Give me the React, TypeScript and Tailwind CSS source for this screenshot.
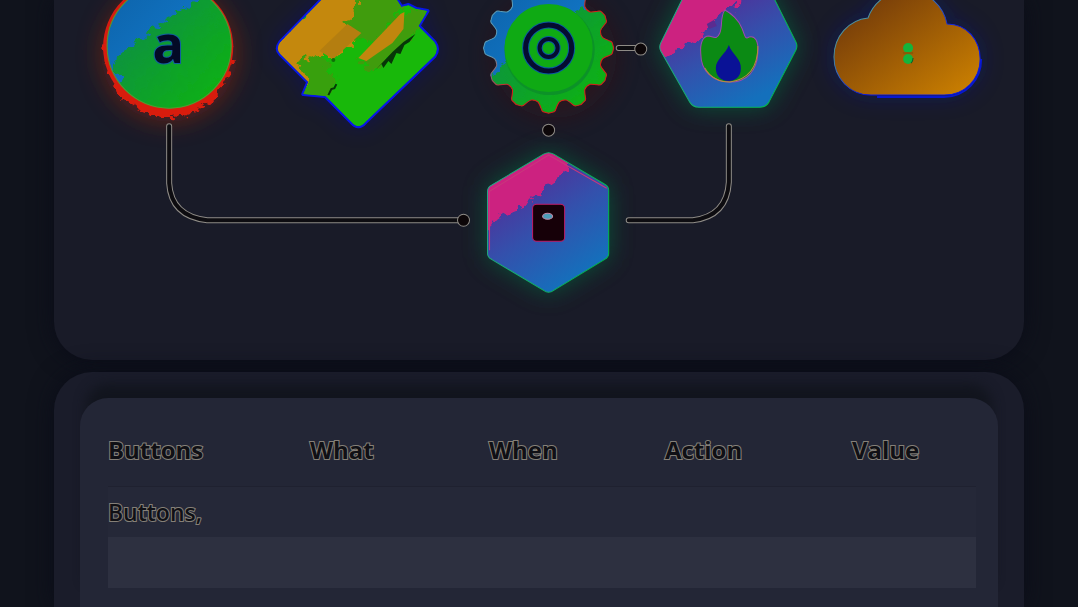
const columns = [
  { label: 'Buttons', width: 'w-[202px]' },
  { label: 'What', width: 'w-[179px]' },
  { label: 'When', width: 'w-[176px]' },
  { label: 'Action', width: 'w-[187px]' },
  { label: 'Value', width: 'w-[124px]' },
];

const rows = [
  { label: 'Buttons,', className: 'bg-[#252838]' },
  { label: '', className: 'bg-[#2d3040]' },
];

// Gear outline with twelve rounded teeth
function gearPath(cx: number, cy: number) {
  const point = (radius: number, deg: number) => {
    const rad = (deg * Math.PI) / 180;
    return `${(cx + radius * Math.cos(rad)).toFixed(1)} ${(cy + radius * Math.sin(rad)).toFixed(1)}`;
  };
  let d = `M${point(55, -11)}`;
  for (let i = 0; i < 12; i++) {
    const a = i * 30;
    d += ` Q${point(57, a - 9)} ${point(61, a - 7)}`;
    d += ` Q${point(64, a - 6)} ${point(64, a - 4)}`;
    d += ` L${point(65, a)} L${point(64, a + 4)}`;
    d += ` Q${point(64, a + 6)} ${point(61, a + 7)}`;
    d += ` Q${point(57, a + 9)} ${point(55, a + 11)}`;
    d += ` Q${point(53, a + 15)} ${point(55, a + 19)}`;
  }
  return d + 'Z';
}

const gear = gearPath(548, 48);
const ticket =
  'M325 -4 L280 42 Q275 49 280 54 L308 82 L303 94 L325 96 L351 122 Q358 130 365 122 L434 56 Q439 49 434 42 L418 26 L427 11 L416 9 L408 5 L401 7 L394 -4 Z';
const fireHex =
  'M685 -8 Q688 -13 694 -13 L761 -13 Q767 -13 770 -8 L795 42 Q797 46 795 50 L768 102 Q765 107 759 107 L698 107 Q692 107 689 102 L660 51 Q658 47 660 43 Z';
const fileHex =
  'M543 154 Q548 151 553 154 L604 184 Q608 186 608 190 L608 253 Q608 257 604 259 L553 290 Q548 294 543 290 L491 259 Q487 257 487 253 L487 191 Q487 187 491 185 Z';
const cloud =
  'M870 95 C849 95 833 78 833 57 C833 36 848 20 867 18 A41 41 0 0 1 946 24 C966 24 979 40 979 59 C979 79 964 95 943 95 Z';
const flame =
  'M724 10 C730 13 738 20 741 28 C744 35 744 40 748 37 C754 35 758 41 757 53 C756 71 746 82 729 82 C712 82 700 71 700 54 C699 43 702 36 708 36 C713 37 716 40 719 33 C722 26 719 17 724 10 Z';

const edges = [
  'M169 126 V183 Q171 216 207 220 H460',
  'M728 126 V182 Q726 216 692 220 H628',
  'M618 48 H638',
];

const ports = [
  { x: 463, y: 220 },
  { x: 548, y: 130 },
  { x: 640, y: 49 },
];

function Definitions() {
  return (
    <defs>
      <filter id="ragged" x="-10%" y="-10%" width="120%" height="120%">
        <feTurbulence type="fractalNoise" baseFrequency="0.12" numOctaves="3" seed="4" />
        <feDisplacementMap in="SourceGraphic" scale="16" xChannelSelector="R" yChannelSelector="G" />
      </filter>
      <filter id="glow" x="-50%" y="-50%" width="200%" height="200%">
        <feGaussianBlur stdDeviation="12" />
      </filter>
      <linearGradient id="blue" x1="0" y1="0" x2="1" y2="1">
        <stop offset="0" stopColor="#0d62a8" />
        <stop offset="1" stopColor="#1484dc" />
      </linearGradient>
      <linearGradient id="green" x1="0" y1="0" x2="1" y2="1">
        <stop offset="0.15" stopColor="#0d8c48" />
        <stop offset="0.9" stopColor="#0fba08" />
      </linearGradient>
      <linearGradient id="orange" x1="0" y1="0" x2="1" y2="1">
        <stop offset="0.1" stopColor="#70380a" />
        <stop offset="1" stopColor="#d08400" />
      </linearGradient>
      <linearGradient id="indigo" x1="0.2" y1="0" x2="0.8" y2="1">
        <stop offset="0.1" stopColor="#552a96" />
        <stop offset="0.5" stopColor="#3450ac" />
        <stop offset="0.9" stopColor="#1470bc" />
      </linearGradient>
      <linearGradient id="gearEdge" x1="0" y1="0" x2="1" y2="1">
        <stop offset="0.3" stopColor="#5b9cb8" />
        <stop offset="0.5" stopColor="#d81c14" />
      </linearGradient>
      <linearGradient id="hexEdge" x1="0" y1="0.3" x2="1" y2="0.6">
        <stop offset="0" stopColor="#22a884" />
        <stop offset="1" stopColor="#00b84c" />
      </linearGradient>
      <linearGradient id="cloudEdge" x1="0" y1="0" x2="1" y2="1">
        <stop offset="0.3" stopColor="#4a90a0" />
        <stop offset="0.6" stopColor="#0818e8" />
      </linearGradient>
      <clipPath id="discClip"><circle cx="169" cy="46" r="62" /></clipPath>
      <clipPath id="ticketClip"><path d={ticket} /></clipPath>
      <clipPath id="gearClip"><path d={gear} /></clipPath>
      <clipPath id="fireClip"><path d={fireHex} /></clipPath>
      <clipPath id="fileClip"><path d={fileHex} /></clipPath>
    </defs>
  );
}

function LetterNode() {
  return (
    <g>
      <circle cx="169" cy="54" r="68" fill="#a02808" opacity="0.5" filter="url(#glow)" />
      <circle cx="168" cy="47" r="65" fill="#d81c10" />
      <circle cx="168" cy="54" r="63" fill="#d81c10" filter="url(#ragged)" />
      <circle cx="169" cy="46" r="62" fill="url(#blue)" />
      <g clipPath="url(#discClip)">
        <path
          d="M125 95 L113 62 L127 49 L142 37 L163 22 L182 9 L206 -4 L212 -30 L260 -20 L260 130 L120 130 Z"
          fill="url(#green)"
          filter="url(#ragged)"
        />
      </g>
      <circle cx="169" cy="46" r="62" fill="none" stroke="#559a2c" strokeWidth="1" />
      <text
        x="168"
        y="63"
        textAnchor="middle"
        fontFamily="'Open Sans', sans-serif"
        fontSize="52"
        fontWeight="700"
        fill="#030a26"
        stroke="#1260a0"
        strokeWidth="2"
        paintOrder="stroke"
      >
        a
      </text>
    </g>
  );
}

function TicketNode() {
  return (
    <g>
      <path d={ticket} fill="#0a10a0" opacity="0.4" filter="url(#glow)" />
      <path d={ticket} fill="#18b80a" stroke="#0818e8" strokeWidth="4" strokeLinejoin="round" />
      <g clipPath="url(#ticketClip)">
        <path d={ticket} fill="#18b80a" />
        <g filter="url(#ragged)">
          <path d="M270 49 L328 -10 L360 -10 L356 16 L349 25 L360 33 L333 58 L318 54 L300 65 L312 88 L300 84 Z" fill="#c4880e" />
          <path d="M356 -10 L406 -10 L400 12 L372 42 L352 38 L346 25 L355 18 Z" fill="#409c0a" />
          <path d="M298 62 L319 54 L328 66 L337 82 L325 98 L296 100 L309 84 Z" fill="#38a00a" />
          <path d="M358 60 L402 14 L430 4 L426 22 L373 72 Z" fill="#409c0a" />
        </g>
        <path d="M319 51 L347 24 L361 33 L333 59 Z" fill="#b47e10" />
        <path d="M358 58 L400 14 L404 12 L403 29 L392 43 L366 61 Z" fill="#c0860e" />
        <path
          d="M373 72 L381 64 L383 68 L388 61 L391 64 L396 53 L400 54 L404 45 L409 42 L415 34 L403 42 L392 52 Z"
          fill="#073608"
        />
        <path d="M328 95 L331 89 L334 88 L336 84" fill="none" stroke="#073608" strokeWidth="2" />
        <circle cx="333" cy="60" r="2" fill="#107008" />
      </g>
    </g>
  );
}

function GearNode() {
  return (
    <g>
      <circle cx="554" cy="56" r="62" fill="#4a0808" opacity="0.35" filter="url(#glow)" />
      <path d={gear} fill="url(#blue)" />
      <g clipPath="url(#gearClip)">
        <path d="M480 84 L512 58 L548 26 L584 8 L620 -14 L630 120 L490 130 Z" fill="url(#green)" filter="url(#ragged)" />
      </g>
      <path d={gear} fill="none" stroke="url(#gearEdge)" strokeWidth="1" />
      <circle cx="549" cy="50" r="45" fill="#0c9228" />
      <circle cx="548" cy="48" r="44" fill="#0faa14" />
      <circle cx="548" cy="48" r="23" fill="none" stroke="#0a5aa0" strokeWidth="7" />
      <circle cx="548" cy="48" r="23" fill="none" stroke="#040c30" strokeWidth="5" />
      <circle cx="548" cy="48" r="9" fill="none" stroke="#0a5aa0" strokeWidth="6" />
      <circle cx="548" cy="48" r="9" fill="none" stroke="#040c30" strokeWidth="4" />
    </g>
  );
}

function FireNode() {
  return (
    <g>
      <path d={fireHex} fill="#046a3c" opacity="0.7" filter="url(#glow)" />
      <path d={fireHex} fill="url(#indigo)" />
      <g clipPath="url(#fireClip)">
        <path d="M650 62 L674 50 L696 42 L708 26 L722 14 L742 -2 L744 -30 L650 -30 Z" fill="#cc2480" filter="url(#ragged)" />
        <path d="M706 24 L713 20 L716 26 L708 29 Z" fill="#5a2c90" />
      </g>
      <path d={fireHex} fill="none" stroke="url(#hexEdge)" strokeWidth="1" />
      <path d={flame} fill="#0b8a14" stroke="#a048b0" strokeWidth="1" />
      <path d="M704 68 Q712 82 729 82 Q757 78 757 46" fill="none" stroke="#b88a40" strokeWidth="1" />
      <path d="M728 45 C731 54 741 59 740 69 C740 77 734 81 728 81 C720 81 715 76 715 68 C715 59 725 54 728 45 Z" fill="#0a1296" />
    </g>
  );
}

function CloudNode() {
  return (
    <g>
      <path d={cloud} fill="#0618a0" opacity="0.4" filter="url(#glow)" />
      <path d="M876 97 H943 C965 96 980 80 980 59" fill="none" stroke="#0818d0" strokeWidth="2" />
      <path d={cloud} fill="url(#orange)" stroke="url(#cloudEdge)" strokeWidth="1" />
      <circle cx="907" cy="48" r="5" fill="#14b43c" />
      <circle cx="907" cy="59" r="5" fill="#14b43c" />
      <path d="M902 53 H912" stroke="#8a5a08" strokeWidth="2" />
      <path d="M910 63 Q912 61 912 58" fill="none" stroke="#0c5a28" strokeWidth="1" />
    </g>
  );
}

function FileNode() {
  return (
    <g>
      <path d={fileHex} fill="#046a3c" opacity="0.7" filter="url(#glow)" />
      <path d={fileHex} fill="url(#indigo)" />
      <g clipPath="url(#fileClip)">
        <path d="M480 244 L492 222 L504 214 L522 207 L540 194 L558 178 L572 164 L572 140 L480 140 Z" fill="#cc2480" filter="url(#ragged)" />
      </g>
      <path d={fileHex} fill="none" stroke="url(#hexEdge)" strokeWidth="1" />
      <path d="M489 250 V191 L548 155 L606 188" fill="none" stroke="#c8387c" strokeWidth="1" />
      <rect x="532" y="204" width="32" height="37" rx="4" fill="#160008" stroke="#c01c68" strokeWidth="1" />
      <ellipse cx="547" cy="216" rx="5" ry="3" fill="#4c9cb8" stroke="#c088a8" strokeWidth="1" />
    </g>
  );
}

function Diagram() {
  return (
    <svg viewBox="54 0 969 360" className="block w-full overflow-visible" role="img" aria-label="Flow">
      <Definitions />
      <LetterNode />
      <TicketNode />
      <GearNode />
      <FireNode />
      <CloudNode />
      <FileNode />
      {edges.map((d) => (
        <g key={d} fill="none" strokeLinecap="round">
          <path d={d} stroke="#8e8b86" strokeWidth="6" />
          <path d={d} stroke="#0d0c10" strokeWidth="4" />
        </g>
      ))}
      {ports.map((port) => (
        <circle key={`${port.x}-${port.y}`} cx={port.x} cy={port.y} r="6" fill="#0c0608" stroke="#8e8b86" strokeWidth="1" />
      ))}
    </svg>
  );
}

function ActionsTable() {
  return (
    <table className="w-full table-fixed border-collapse text-left text-2xl text-[#101015] [-webkit-text-stroke:2px_#858078] [paint-order:stroke_fill]">
      <thead>
        <tr className="h-[60px] border-b border-[#1f2130]">
          {columns.map((column) => (
            <th key={column.label} scope="col" className={`${column.width} p-0 pb-3 font-bold`}>
              {column.label}
            </th>
          ))}
        </tr>
      </thead>
      <tbody>
        {rows.map((row, index) => (
          <tr key={index} className={`h-[51px] ${row.className}`}>
            <td className="p-0 text-[23px] font-semibold">{row.label}</td>
            <td colSpan={4} className="p-0" />
          </tr>
        ))}
      </tbody>
    </table>
  );
}

export default function App() {
  return (
    <main className="flex min-h-screen flex-col gap-3 overflow-hidden bg-[#10131c] px-[5%] font-['Open_Sans',sans-serif]">
      <section className="overflow-hidden rounded-b-[38px] bg-[#191b28] shadow-[0_0_24px_#0a0c18]">
        <Diagram />
      </section>

      <section className="flex flex-1 flex-col rounded-t-[38px] bg-[#1a1c2a] px-[26px] pt-[26px] shadow-[0_0_24px_#0a0c18]">
        <div className="flex-1 rounded-t-[28px] bg-[#232636] px-7 pt-7 shadow-[0_-20px_12px_-6px_#12151e]">
          <ActionsTable />
        </div>
      </section>
    </main>
  );
}
